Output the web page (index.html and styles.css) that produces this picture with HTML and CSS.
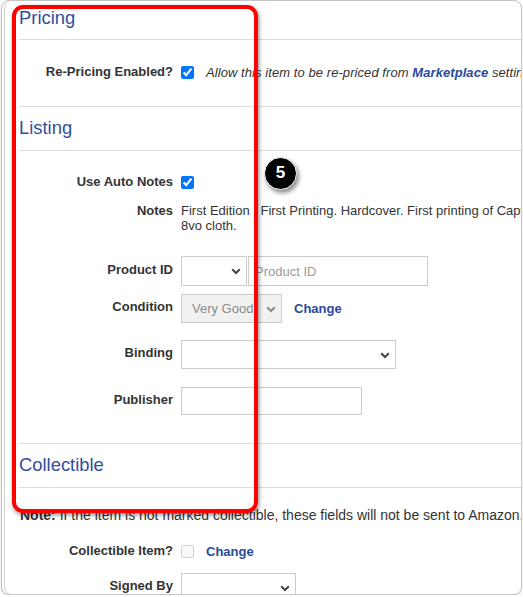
FILE: index.html
```html
<!DOCTYPE html>
<html lang="en">
<head>
<meta charset="utf-8">
<title>Item settings</title>
<link rel="stylesheet" href="styles.css">
</head>
<body>
<div class="frame">
  <div class="content">
    <section class="section">
      <h2 class="sec-head sec-head-first">Pricing</h2>
      <div class="sec-body pricing-body">
        <div class="row">
          <label class="lbl">Re-Pricing Enabled?</label>
          <div class="ctl">
            <input type="checkbox" class="cb" checked>
            <span class="help">Allow this item to be re-priced from <b class="mk">Marketplace</b> settings.</span>
          </div>
        </div>
      </div>
    </section>

    <section class="section">
      <h2 class="sec-head">Listing</h2>
      <div class="sec-body listing-body">
        <div class="row row-auto">
          <label class="lbl">Use Auto Notes</label>
          <div class="ctl"><input type="checkbox" class="cb" checked></div>
        </div>
        <div class="row row-notes">
          <label class="lbl lbl-notes">Notes</label>
          <div class="notes">First Edition . First Printing. Hardcover. First printing of Captain Blood in the<br>8vo cloth.</div>
        </div>
        <div class="row row-pid">
          <label class="lbl lbl-box">Product ID</label>
          <div class="ctl ctl-pair">
            <div class="sel sel-pid">
              <select class="sel-box"><option></option></select>
              <svg class="chev" width="10" height="7" viewBox="0 0 10 7"><path d="M1.2 1.2 5 5 8.8 1.2" fill="none" stroke="#444" stroke-width="2"/></svg>
            </div>
            <input class="txt txt-pid" type="text" placeholder="Product ID">
          </div>
        </div>
        <div class="row row-cond">
          <label class="lbl lbl-box">Condition</label>
          <div class="ctl">
            <div class="sel sel-cond">
              <select class="sel-box sel-disabled" disabled><option>Very Good</option></select>
              <svg class="chev" width="10" height="7" viewBox="0 0 10 7"><path d="M1.2 1.2 5 5 8.8 1.2" fill="none" stroke="#8a8a8a" stroke-width="2"/></svg>
            </div>
            <a class="link link-cond" href="#">Change</a>
          </div>
        </div>
        <div class="row row-bind">
          <label class="lbl lbl-box">Binding</label>
          <div class="ctl">
            <div class="sel sel-bind">
              <select class="sel-box"><option></option></select>
              <svg class="chev" width="10" height="7" viewBox="0 0 10 7"><path d="M1.2 1.2 5 5 8.8 1.2" fill="none" stroke="#444" stroke-width="2"/></svg>
            </div>
          </div>
        </div>
        <div class="row row-pub">
          <label class="lbl lbl-box">Publisher</label>
          <div class="ctl"><input class="txt txt-pub" type="text"></div>
        </div>
      </div>
    </section>

    <section class="section">
      <h2 class="sec-head">Collectible</h2>
      <div class="sec-body coll-body">
        <p class="note"><b>Note:</b> If the item is not marked collectible, these fields will not be sent to Amazon.</p>
        <div class="row row-coll">
          <label class="lbl">Collectible Item?</label>
          <div class="ctl">
            <input type="checkbox" class="cb" disabled>
            <a class="link link-coll" href="#">Change</a>
          </div>
        </div>
        <div class="row row-signed">
          <label class="lbl lbl-box">Signed By</label>
          <div class="ctl">
            <div class="sel sel-signed">
              <select class="sel-box"><option></option></select>
              <svg class="chev" width="10" height="7" viewBox="0 0 10 7"><path d="M1.2 1.2 5 5 8.8 1.2" fill="none" stroke="#444" stroke-width="2"/></svg>
            </div>
          </div>
        </div>
      </div>
    </section>
  </div>

  <div class="callout"></div>
  <div class="badge">5</div>
</div>
</body>
</html>
```

FILE: styles.css
```css
html, body {
  margin: 0;
  padding: 0;
  background: #ffffff;
}

body {
  font-family: "Liberation Sans", Arial, sans-serif;
  font-size: 13px;
  color: #333333;
}

.frame {
  position: relative;
  box-sizing: border-box;
  margin-left: 1px;
  width: 521px;
  height: 595px;
  border: 1px solid #c6c6c6;
  border-radius: 8px;
  overflow: hidden;
  background: #ffffff;
  box-shadow: inset 2px 0 0 #ffffff, inset 3px 0 0 #d4d4d4, 0 1px 2px rgba(0, 0, 0, 0.15);
}

.content {
  width: 760px;
  padding-left: 17px;
}

.sec-head {
  margin: 0;
  padding: 11px 0 12px 0;
  font-size: 18.4px;
  line-height: 20px;
  font-weight: normal;
  color: #2f4f9f;
  border-bottom: 1px solid #dcdcdc;
}

.sec-head-first {
  padding-top: 7px;
  padding-bottom: 11px;
}

.sec-body {
  border-bottom: 1px solid #dcdcdc;
}

.pricing-body {
  padding: 23px 0 25px 0;
}

.listing-body {
  padding: 22px 0 28px 0;
}

.coll-body {
  padding: 20px 0 0 0;
  border-bottom: none;
}

.row {
  display: grid;
  grid-template-columns: 154px auto;
  column-gap: 8px;
  align-items: center;
}

.lbl {
  text-align: right;
  font-weight: bold;
  font-size: 13px;
  line-height: 18px;
  color: #333333;
}

.lbl-box {
  padding-bottom: 3px;
}

.ctl {
  display: flex;
  align-items: center;
  min-height: 18px;
}

.cb {
  margin: 0;
  width: 13px;
  height: 13px;
  accent-color: #0075ff;
}

.help {
  margin-left: 12px;
  font-style: italic;
  white-space: nowrap;
  color: #333333;
  letter-spacing: 0.07px;
}

.mk {
  color: #2a4a9c;
}

.row-notes {
  margin-top: 12px;
  align-items: start;
}

.lbl-notes {
  line-height: 15px;
}

.notes {
  line-height: 15px;
  white-space: nowrap;
}

.row-pid {
  margin-top: 23px;
}

.ctl-pair {
  gap: 1px;
}

.sel {
  position: relative;
  display: flex;
}

.sel-box {
  appearance: none;
  -webkit-appearance: none;
  box-sizing: border-box;
  margin: 0;
  padding: 0 20px 0 10px;
  width: 100%;
  height: 100%;
  border: 1px solid #cccccc;
  border-radius: 0;
  background: #ffffff;
  font-family: "Liberation Sans", Arial, sans-serif;
  font-size: 13px;
  color: #333333;
  outline: none;
}

.sel-disabled {
  background: #f1f1f1;
  color: #8a8a8a;
  opacity: 1;
}

.chev {
  position: absolute;
  right: 6px;
  top: 50%;
  margin-top: -3px;
  pointer-events: none;
}

.sel-pid {
  width: 66px;
  height: 30px;
}

.txt {
  box-sizing: border-box;
  margin: 0;
  padding: 0 6px;
  border: 1px solid #cccccc;
  border-radius: 0;
  font-family: "Liberation Sans", Arial, sans-serif;
  font-size: 13px;
  color: #333333;
  background: #ffffff;
  outline: none;
}

.txt::placeholder {
  color: #9a9a9a;
}

.txt-pid {
  width: 180px;
  height: 30px;
}

.row-cond {
  margin-top: 8px;
}

.sel-cond {
  width: 101px;
  height: 29px;
}

.link {
  font-weight: bold;
  font-size: 13px;
  color: #2a4a9c;
  text-decoration: none;
}

.link-cond {
  margin-left: 12px;
}

.row-bind {
  margin-top: 17px;
}

.sel-bind {
  width: 215px;
  height: 29px;
}

.row-pub {
  margin-top: 18px;
}

.txt-pub {
  width: 181px;
  height: 28px;
}

.note {
  margin: 0 0 0 1px;
  font-size: 14px;
  line-height: 15px;
  white-space: nowrap;
  color: #333333;
}

.row-coll {
  margin-top: 19px;
}

.link-coll {
  margin-left: 12px;
}

.row-signed {
  margin-top: 13px;
}

.sel-signed {
  width: 115px;
  height: 29px;
}

.callout {
  position: absolute;
  left: 10px;
  top: 4px;
  width: 246px;
  height: 508px;
  box-sizing: border-box;
  border: 4px solid #ff0000;
  border-radius: 11px;
  box-shadow: 1px 2px 4px rgba(0, 0, 0, 0.45);
  pointer-events: none;
}

.badge {
  position: absolute;
  left: 262px;
  top: 156px;
  width: 33px;
  height: 33px;
  box-sizing: border-box;
  border: 1.5px solid #ffffff;
  border-radius: 50%;
  background: #000000;
  color: #ffffff;
  font-family: "Liberation Sans", Arial, sans-serif;
  font-weight: bold;
  font-size: 17px;
  line-height: 30px;
  text-align: center;
  box-shadow: 2px 3px 4px rgba(0, 0, 0, 0.45);
}
```
